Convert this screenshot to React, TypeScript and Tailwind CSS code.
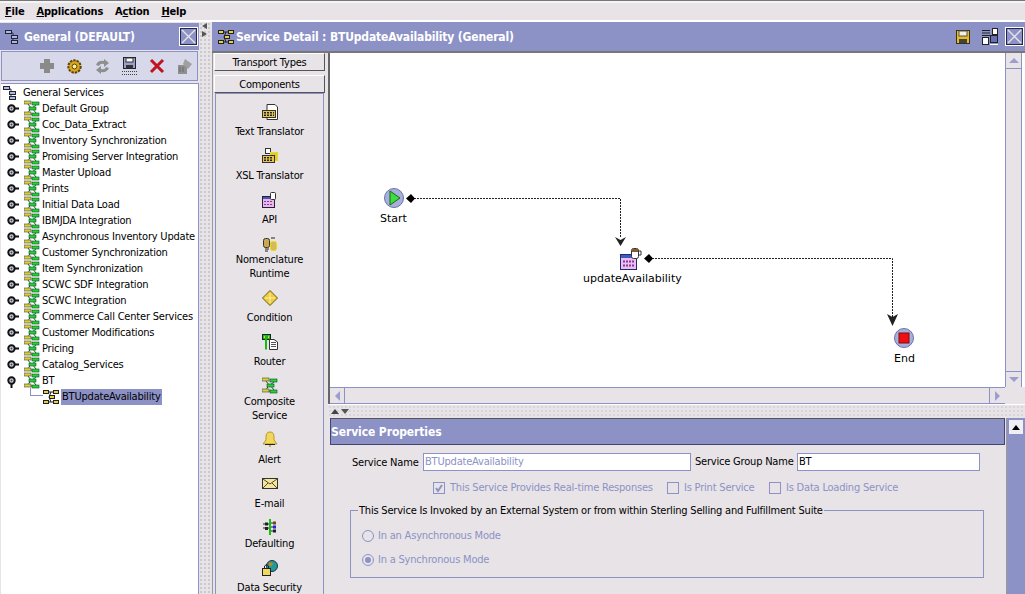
import type { ReactNode } from "react"

const groups = [
	"Default Group",
	"Coc_Data_Extract",
	"Inventory Synchronization",
	"Promising Server Integration",
	"Master Upload",
	"Prints",
	"Initial Data Load",
	"IBMJDA Integration",
	"Asynchronous Inventory Update",
	"Customer Synchronization",
	"Item Synchronization",
	"SCWC SDF Integration",
	"SCWC Integration",
	"Commerce Call Center Services",
	"Customer Modifications",
	"Pricing",
	"Catalog_Services",
	"BT",
]

function CloseBox() {
	return (
		<svg width="19" height="19" viewBox="0 0 19 19" className="shrink-0">
			<rect x="0.5" y="0.5" width="18" height="18" fill="#fff" stroke="#fff" />
			<rect x="1.5" y="1.5" width="16" height="16" fill="#8c92c6" stroke="#23264a" />
			<path d="M3 3 L16 16 M16 3 L3 16" stroke="#e7e3e7" strokeWidth="1.4" />
		</svg>
	)
}

function Handle({ open }: { open?: boolean }) {
	return (
		<svg width="13" height="13" viewBox="0 0 13 13" className="shrink-0">
			<circle cx="4.5" cy="5.5" r="3.2" fill="#cfd2e8" stroke="#111" strokeWidth="2" />
			<circle cx="4.5" cy="5.5" r="1" fill="#444" />
			{open ? <path d="M4.5 8 V13" stroke="#111" strokeWidth="2" /> : <path d="M7 5.5 H12" stroke="#111" strokeWidth="2" />}
		</svg>
	)
}

function Hier({ size = 16 }: { size?: number }) {
	return (
		<svg width={size} height={size} viewBox="0 0 16 16" className="shrink-0">
			<path d="M3 4 H8 V13 H12 M8 8 H12" stroke="#333" fill="none" />
			<rect x="0.5" y="1.5" width="6" height="3" fill="#a8b8e8" stroke="#223" />
			<rect x="6.5" y="6.5" width="6" height="3" fill="#a8b8e8" stroke="#223" />
			<rect x="6.5" y="11.5" width="6" height="3" fill="#a8b8e8" stroke="#223" />
		</svg>
	)
}

function Composite() {
	return (
		<svg width="16" height="18" viewBox="0 0 16 18" className="shrink-0 -my-[1px]">
			<path d="M4 4 L7 8 L4 13 M12 5 L8 8 L12 13 M5 14 H11" stroke="#1a6a1a" fill="none" />
			<rect x="0" y="1" width="7" height="3" fill="#d8d23a" stroke="#444" strokeWidth="0.6" />
			<rect x="8" y="2" width="7" height="3" fill="#27d327" stroke="#144" strokeWidth="0.6" />
			<rect x="5" y="7" width="7" height="3" fill="#27d327" stroke="#144" strokeWidth="0.6" />
			<rect x="0" y="12" width="7" height="3" fill="#d8d23a" stroke="#444" strokeWidth="0.6" />
			<rect x="8" y="13" width="7" height="3" fill="#27d327" stroke="#144" strokeWidth="0.6" />
		</svg>
	)
}

function Service() {
	return (
		<svg width="16" height="16" viewBox="0 0 16 16" className="shrink-0">
			<path d="M4 3 H12 M8 3 L6 8 L8 13 M4 13 H12 M6 8 H11" stroke="#222" fill="none" />
			<rect x="0.5" y="1.5" width="5" height="3" fill="#e4cf45" stroke="#222" />
			<rect x="10.5" y="1.5" width="5" height="3" fill="#e4cf45" stroke="#222" />
			<rect x="6.5" y="6.5" width="5" height="3" fill="#e4cf45" stroke="#222" />
			<rect x="0.5" y="11.5" width="5" height="3" fill="#e4cf45" stroke="#222" />
			<rect x="10.5" y="11.5" width="5" height="3" fill="#e4cf45" stroke="#222" />
		</svg>
	)
}

function ToolIcons() {
	return (
		<>
			<svg width="16" height="16" viewBox="0 0 16 16">
				<path d="M5 1 H11 V5 H15 V11 H11 V15 H5 V11 H1 V5 H5 Z" fill="#8a8a8a" />
			</svg>
			<svg width="17" height="17" viewBox="0 0 17 17">
				<circle cx="8.5" cy="8.5" r="6.2" fill="#d9a520" stroke="#5a4308" strokeWidth="2" strokeDasharray="2.4 1" />
				<circle cx="8.5" cy="8.5" r="2.4" fill="#fff0a0" stroke="#5a4308" />
			</svg>
			<svg width="17" height="17" viewBox="0 0 17 17">
				<path d="M2 7 Q4 2 10 3 V1 L15 5 L10 9 V6 Q6 5 5 8 Z M15 10 Q13 15 7 14 V16 L2 12 L7 8 V11 Q11 12 12 9 Z" fill="#8f8f8f" />
			</svg>
			<svg width="16" height="18" viewBox="0 0 16 18">
				<rect x="1.5" y="0.5" width="12" height="11" fill="#9aa0cc" stroke="#222" />
				<rect x="4" y="1" width="7" height="4" fill="#fff" stroke="#333" />
				<rect x="4" y="8" width="7" height="3.5" fill="#333" />
				<path d="M0 14.5 H16 M0 17.5 H16" stroke="#444" strokeDasharray="1 1" />
			</svg>
			<svg width="16" height="16" viewBox="0 0 16 16">
				<path d="M2 2 L14 14 M14 2 L2 14" stroke="#c01420" strokeWidth="3" />
			</svg>
			<svg width="17" height="17" viewBox="0 0 17 17">
				<path d="M2 7 H11 V16 H2 Z" fill="#8f8f8f" />
				<path d="M9 1 L16 6 L12 11 L7 6 Z" fill="#a0a0a0" />
				<path d="M4 9 V14 M7 9 V14" stroke="#6a6a6a" />
			</svg>
		</>
	)
}

function Doc({ children }: { children: ReactNode }) {
	return (
		<svg width="16" height="16" viewBox="0 0 16 16">
			{children}
		</svg>
	)
}

const palette: { lines: string[]; icon: ReactNode; cls: string }[] = [
	{
		lines: ["Text Translator"],
		cls: "mt-[10px] gap-[4px]",
		icon: (
			<Doc>
				<path d="M5 .5 H13 L15.5 3 V15.5 H5 Z" fill="#fff" stroke="#333" />
				<rect x="0.5" y="6.5" width="13" height="7" fill="#e4c44a" stroke="#333" />
				<path d="M2 8.5 H12 M2 10 H12 M2 11.5 H12" stroke="#222" strokeDasharray="2 1" />
			</Doc>
		),
	},
	{
		lines: ["XSL Translator"],
		cls: "mt-[10px] gap-[4px]",
		icon: (
			<Doc>
				<rect x="3.5" y="0.5" width="5" height="5" fill="#fff" stroke="#333" />
				<rect x="8.5" y="4.5" width="7" height="8" fill="#e4c44a" stroke="#e8e000" />
				<rect x="0.5" y="7.5" width="12" height="7" fill="#e4c44a" stroke="#333" />
				<path d="M2 9.5 H11 M2 11 H11 M2 12.5 H11" stroke="#222" strokeDasharray="2 1" />
			</Doc>
		),
	},
	{
		lines: ["API"],
		cls: "mt-[10px] gap-[4px]",
		icon: (
			<Doc>
				<rect x="0.5" y="4.5" width="12" height="11" fill="#eeb4ee" stroke="#223" />
				<rect x="1" y="5" width="11" height="2" fill="#3b5bbf" />
				<path d="M2 9.5 H11 M2 12.5 H11" stroke="#7a3f9a" strokeDasharray="2 1" />
				<rect x="8.5" y="0.5" width="5" height="7" rx="1" fill="#fff" stroke="#333" />
			</Doc>
		),
	},
	{
		lines: ["Nomenclature", "Runtime"],
		cls: "mt-[10px] gap-0",
		icon: (
			<Doc>
				<rect x="1.5" y="2.5" width="6" height="9" rx="2" fill="#c9a850" stroke="#333" />
				<rect x="8.5" y="5.5" width="6" height="9" rx="2" fill="#d6b860" stroke="#e8e000" />
				<path d="M3 13 H7 M3 15 H6 M9 2 H13" stroke="#222" />
			</Doc>
		),
	},
	{
		lines: ["Condition"],
		cls: "mt-[10px] gap-[4px]",
		icon: (
			<Doc>
				<path d="M8 0.5 L15.5 8 L8 15.5 L0.5 8 Z" fill="#eccb45" stroke="#6b5a10" />
				<path d="M8 3 V13 M3 8 H13" stroke="#fff2a0" />
			</Doc>
		),
	},
	{
		lines: ["Router"],
		cls: "mt-[10px] gap-[4px]",
		icon: (
			<Doc>
				<rect x="0.5" y="0.5" width="8" height="5" fill="#17b817" stroke="#123" />
				<path d="M3 1.5 L1.5 3 L3 4.5 Z M6 1.5 L7.5 3 L6 4.5 Z" fill="#ee0" />
				<rect x="3" y="5" width="2" height="10.5" fill="#17b817" />
				<path d="M7.5 5.5 H12 L15.5 8 V15.5 H7.5 Z" fill="#fff" stroke="#333" />
				<path d="M9 8.5 H14 M9 10.5 H14 M9 12.5 H14" stroke="#555" />
			</Doc>
		),
	},
	{ lines: ["Composite", "Service"], cls: "mt-[10px] gap-0", icon: <Composite /> },
	{
		lines: ["Alert"],
		cls: "mt-[9px] gap-[5px]",
		icon: (
			<Doc>
				<path d="M8 1 Q12 1 12 6 V9 L15 13 H1 L4 9 V6 Q4 1 8 1 Z" fill="#f0d860" stroke="#b89a20" />
				<path d="M3 13.5 H13" stroke="#222" />
				<circle cx="8" cy="15" r="1" fill="#b89a20" />
			</Doc>
		),
	},
	{
		lines: ["E-mail"],
		cls: "mt-[10px] gap-[4px]",
		icon: (
			<Doc>
				<rect x="0.5" y="2.5" width="15" height="10" fill="#f4e6a0" stroke="#333" />
				<path d="M1 3 L8 8 L15 3 M1 12 L6 7 M15 12 L10 7" stroke="#5a4a20" fill="none" />
			</Doc>
		),
	},
	{
		lines: ["Defaulting"],
		cls: "mt-[9px] gap-[1px]",
		icon: (
			<Doc>
				<rect x="7" y="0" width="2" height="16" fill="#12c012" />
				<path d="M1 5 H7 M1 9 H7 M9 4 H14 M9 8 H14 M9 12 H14" stroke="#222" />
				<rect x="3" y="3.5" width="3" height="3" fill="#222" />
				<rect x="3" y="8" width="3" height="3" fill="#222" />
				<rect x="11" y="2.5" width="3" height="3" fill="#6b4b20" />
				<rect x="11" y="6.5" width="3" height="3" fill="#2222dd" />
				<rect x="11" y="10.5" width="3" height="3" fill="#222" />
			</Doc>
		),
	},
	{
		lines: ["Data Security"],
		cls: "mt-[10px] gap-[4px]",
		icon: (
			<Doc>
				<circle cx="10" cy="6" r="5.5" fill="#1f9a9a" stroke="#234" />
				<path d="M7 2 L11 3 L10 6 L7 6 Z" fill="#b98a20" />
				<rect x="0.5" y="8.5" width="8" height="7" fill="#f0d860" stroke="#222" />
				<path d="M2.5 8 V6 Q4.5 3 6.5 6 V8" stroke="#222" fill="none" />
			</Doc>
		),
	},
]

function Arrow({ dir }: { dir: "up" | "down" | "left" | "right" }) {
	const d = {
		up: "M0 5 L5 0 L10 5 Z",
		down: "M0 0 H10 L5 5 Z",
		left: "M5 0 V10 L0 5 Z",
		right: "M0 0 V10 L5 5 Z",
	}[dir]
	const horizontal = dir === "left" || dir === "right"
	return (
		<svg width={horizontal ? 5 : 10} height={horizontal ? 10 : 5}>
			<path d={d} fill="#9a9fcf" />
		</svg>
	)
}

function Diagram() {
	return (
		<div className="relative flex-1 bg-white overflow-hidden tracking-normal">
			{/* canvas origin is 330,53 */}
			<svg width="675" height="335" className="absolute left-0 top-0">
				<path d="M81 145.5 H290.5 V185" stroke="#222" strokeDasharray="2 1" fill="none" />
				<path d="M319 205.5 H562.5 V265" stroke="#222" strokeDasharray="2 1" fill="none" />
				<path d="M285 184 L290.5 187 L296 184 L290.5 193 Z" fill="#222" />
				<path d="M557 261 L562.5 264 L568 261 L562.5 273 Z" fill="#222" />
				<path d="M81 141 L85 145.5 L81 150 L76 145.5 Z" fill="#000" />
				<path d="M319 201 L323 205.5 L319 210 L314 205.5 Z" fill="#000" />
				<circle cx="64" cy="145" r="9.5" fill="#a7afdc" stroke="#6d72a5" />
				<path d="M60 138 L70 145 L60 152 Z" fill="#3fdc3f" stroke="#156b15" />
				<circle cx="574" cy="285" r="9.5" fill="#a7afdc" stroke="#6d72a5" />
				<rect x="569" y="280" width="10" height="10" fill="#f01010" stroke="#7a1010" />
				<rect x="290.5" y="201.5" width="16" height="15" fill="#f0bcf0" stroke="#1d2a78" />
				<rect x="291" y="202" width="15" height="3" fill="#3b5bbf" />
				<path d="M293 208.5 H304 M293 212.5 H304" stroke="#7a3f9a" strokeWidth="2" strokeDasharray="2 1" />
				<rect x="301.5" y="195.5" width="7" height="10" rx="2" fill="#fff" stroke="#333" />
				<rect x="302" y="196" width="6" height="3" fill="#8a5a2a" />
				<path d="M308 198 H311 V202 H308" stroke="#333" fill="none" />
			</svg>
			<span className="absolute left-[50px] top-[158px] font-['DejaVu_Sans',sans-serif] text-[11px] leading-4">Start</span>
			<span className="absolute left-[253px] top-[218px] font-['DejaVu_Sans',sans-serif] text-[11px] leading-4">updateAvailability</span>
			<span className="absolute left-[564px] top-[298px] font-['DejaVu_Sans',sans-serif] text-[11px] leading-4">End</span>
		</div>
	)
}

function Check({ checked, label, className }: { checked?: boolean; label: string; className: string }) {
	return (
		<div className={`flex items-center gap-[5px] text-[#8c92c6] ${className}`}>
			<span className="w-3 h-3 border border-[#8c92c6] flex items-center justify-center">
				{checked ? (
					<svg width="10" height="10" viewBox="0 0 10 10">
						<path d="M2 5 L4 8 L8 2" stroke="#8c92c6" strokeWidth="2" fill="none" />
					</svg>
				) : null}
			</span>
			<span>{label}</span>
		</div>
	)
}

function Radio({ checked, label }: { checked?: boolean; label: string }) {
	return (
		<div className="flex items-center gap-1 h-4 text-[#8c92c6]">
			<span className="w-3 h-3 rounded-full border border-[#8c92c6] flex items-center justify-center">
				{checked ? <span className="w-[6px] h-[6px] rounded-full bg-[#8c92c6]" /> : null}
			</span>
			<span>{label}</span>
		</div>
	)
}

function Underlined({ head, u, tail }: { head?: string; u: string; tail: string }) {
	return (
		<span>
			{head}
			<span className="underline">{u}</span>
			{tail}
		</span>
	)
}

export default function App() {
	return (
		<div className="w-[1025px] h-[594px] overflow-hidden flex flex-col bg-[#e7e3e7] text-black text-[11px] leading-[14px] tracking-[-0.2px] font-['DejaVu_Sans_Condensed','Liberation_Sans',sans-serif]">
			<div className="h-[3px] bg-[#f4f4f4] border-t border-[#777]" />
			<div className="h-[17px] flex items-center gap-[12px] pl-[5px] font-bold text-[11px]">
				<Underlined u="F" tail="ile" />
				<Underlined u="A" tail="pplications" />
				<Underlined head="A" u="c" tail="tion" />
				<Underlined u="H" tail="elp" />
			</div>
			<div className="h-[2px] bg-white" />
			<div className="flex-1 flex min-h-0">
				<div className="w-[199px] flex flex-col pt-[1px]">
					<div className="h-[27px] bg-[#8c92c6] flex items-center pl-[5px] pr-[1px] gap-[3px] text-white font-bold text-[12px] tracking-[-0.1px]">
						<Hier />
						<span className="flex-1">General (DEFAULT)</span>
						<CloseBox />
					</div>
					<div className="h-[30px] mt-[1px] mx-[1px] bg-[#d7d9ea] border border-[#8c92c6] flex items-center gap-[11px] pl-[37px]">
						<ToolIcons />
					</div>
					<div className="flex-1 mt-[2px] ml-[1px] bg-white border-t border-r border-[#8c92c6] relative pt-[1px] overflow-hidden">
						<div className="h-4 flex items-center gap-[4px] pl-[2px]">
							<Hier />
							<span>General Services</span>
						</div>
						{groups.map((g, i) => (
							<div key={g} className="h-4 flex items-center pl-[6px]">
								<Handle open={i === groups.length - 1} />
								<span className="ml-[4px]">
									<Composite />
								</span>
								<span className="ml-[2px] whitespace-nowrap">{g}</span>
							</div>
						))}
						<div className="h-4 flex items-center pl-[42px]">
							<Service />
							<span className="ml-[2px] px-[1px] bg-[#8c92c6] leading-4">BTUpdateAvailability</span>
						</div>
						<div className="absolute left-[29px] top-[304px] w-[13px] h-[8px] border-l border-b border-[#8c92c6]" />
					</div>
				</div>

				<div className="w-[13px] flex flex-col bg-[radial-gradient(#aaa_0.6px,transparent_0.8px)] bg-[length:4px_4px]">
					<div className="h-[16px] flex flex-col items-start pl-[3px] pt-[1px] gap-[1px]">
						<svg width="5" height="14" viewBox="0 0 5 14">
							<path d="M5 0 V6 L0 3 Z M0 8 L5 11 L0 14 Z" fill="#555" />
						</svg>
					</div>
				</div>

				<div className="flex-1 flex flex-col min-w-0">
					<div className="h-[31px] bg-[#8c92c6] border-b-[2px] border-[#777] flex items-center pl-[6px] pr-[1px] text-white font-bold text-[12px] tracking-[-0.16px]">
						<Service />
						<span className="ml-[2px] flex-1">Service Detail : BTUpdateAvailability (General)</span>
						<svg width="14" height="14" viewBox="0 0 14 14" className="mr-[12px]">
							<rect x="0.5" y="0.5" width="13" height="13" fill="#eab92a" stroke="#332" />
							<rect x="3" y="1" width="8" height="5" fill="#f4efe0" stroke="#554" />
							<rect x="3" y="9" width="8" height="4" fill="#443" />
						</svg>
						<svg width="17" height="17" viewBox="0 0 17 17" className="mr-[6px]">
							<path d="M0 2.5 H8 M0 5 H8 M0 7.5 H8" stroke="#222" />
							<rect x="0.5" y="9.5" width="6" height="7" fill="#fff" stroke="#222" />
							<rect x="10.5" y="0.5" width="5" height="6" fill="#fff" stroke="#222" />
							<rect x="8.5" y="7.5" width="7" height="7" fill="#6a70b4" stroke="#222" />
							<path d="M8 16.5 H16" stroke="#fff" />
						</svg>
						<CloseBox />
					</div>

					<div className="flex-1 flex min-h-0">
						<div className="w-[116px] flex flex-col pl-[1px] pr-[2px] border-l border-[#999]">
							<div className="h-[18px] w-[111px] pt-[1px] border border-[#555] border-l-white border-t-white bg-[#e7e3e7] flex items-center justify-center">Transport Types</div>
							<div className="h-[18px] w-[111px] pt-[1px] mt-[4px] border border-[#555] border-l-white border-t-white bg-[#e7e3e7] flex items-center justify-center">Components</div>
							<div className="flex-1 ml-[1px] border-l border-r border-t border-[#8c92c6] w-[109px] overflow-hidden">
								{palette.map((p) => (
									<div key={p.lines[0]} className={`flex flex-col items-center ${p.cls}`}>
										<div className="h-4">{p.icon}</div>
										<div className="text-center translate-y-[1px]">
											{p.lines.map((l) => (
												<div key={l}>{l}</div>
											))}
										</div>
									</div>
								))}
							</div>
						</div>

						<div className="flex-1 flex flex-col min-w-0">
							<div className="h-[351px] flex flex-col border-l-2 border-[#666]">
								<div className="flex-1 flex min-h-0">
									<Diagram />
									<div className="w-[17px] border-l border-r border-[#8c92c6] bg-[#e7e3e7] flex flex-col justify-between">
										<div className="h-4 border-b border-[#8c92c6] flex items-center justify-center">
											<Arrow dir="up" />
										</div>
										<div className="h-4 border-t border-[#8c92c6] flex items-center justify-center">
											<Arrow dir="down" />
										</div>
									</div>
									<div className="w-[3px] bg-white" />
								</div>
								<div className="h-[17px] flex">
									<div className="flex-1 border-t border-b border-[#8c92c6] flex justify-between">
										<div className="w-[15px] border-r border-[#8c92c6] flex items-center justify-center">
											<Arrow dir="left" />
										</div>
										<div className="w-[16px] border-l border-[#8c92c6] flex items-center justify-center">
											<Arrow dir="right" />
										</div>
									</div>
									<div className="w-[20px]" />
								</div>
							</div>

							<div className="h-[14px] flex items-center pl-[3px] gap-[1px] bg-[radial-gradient(#c4c4c4_0.6px,transparent_0.8px)] bg-[length:4px_4px] border-t border-white">
								<svg width="18" height="5" viewBox="0 0 18 5">
									<path d="M0 5 L4 0 L8 5 Z" fill="#444" />
									<path d="M10 0 H18 L14 5 Z" fill="#555" />
								</svg>
							</div>

							<div className="flex-1 flex min-h-0">
								<div className="flex-1 flex flex-col min-w-0 pl-[2px]">
									<div className="h-[27px] shrink-0 pt-[1px] bg-[#8c92c6] border border-[#3f4473] border-t-[#555] flex items-center text-white font-bold text-[12px] tracking-[-0.1px]">
										Service Properties
									</div>
									<div className="flex items-center mt-[8px] h-[18px] pl-[22px]">
										<span className="w-[65px] pt-[1px] text-right whitespace-nowrap">Service Name</span>
										<div className="ml-[6px] w-[268px] h-[18px] bg-white border border-[#8c92c6] text-[#8c92c6] px-[1px] leading-4">BTUpdateAvailability</div>
										<span className="ml-[4px] w-[98px] whitespace-nowrap">Service Group Name</span>
										<div className="ml-[4px] w-[183px] h-[18px] bg-white border border-[#8c92c6] px-[1px] leading-4">BT</div>
									</div>
									<div className="flex items-center h-[14px] mt-[10px] pl-[103px]">
										<Check checked label="This Service Provides Real-time Responses" className="w-[234px]" />
										<Check label="Is Print Service" className="w-[102px]" />
										<Check label="Is Data Loading Service" className="" />
									</div>
									<div className="relative mt-[15px] ml-[20px] w-[634px] h-[68px] border border-[#8c92c6] pt-[17px] pl-[11px] flex flex-col gap-2">
										<span className="absolute left-[7px] -top-[7px] px-[1px] bg-[#e7e3e7] whitespace-nowrap">This Service Is Invoked by an External System or from within Sterling Selling and Fulfillment Suite</span>
										<Radio label="In an Asynchronous Mode" />
										<Radio checked label="In a Synchronous Mode" />
									</div>
								</div>
								<div className="w-[1px]" />
								<div className="w-[19px] bg-[#8c92c6] border-l border-[#999] pt-[2px] pl-[2px]">
									<div className="w-[14px] h-[14px] bg-[#f0f0f4] flex items-center justify-center">
										<svg width="8" height="5" viewBox="0 0 8 5">
											<path d="M0 5 L4 0 L8 5 Z" fill="#000" />
										</svg>
									</div>
								</div>
							</div>
						</div>
					</div>
				</div>
			</div>
		</div>
	)
}
